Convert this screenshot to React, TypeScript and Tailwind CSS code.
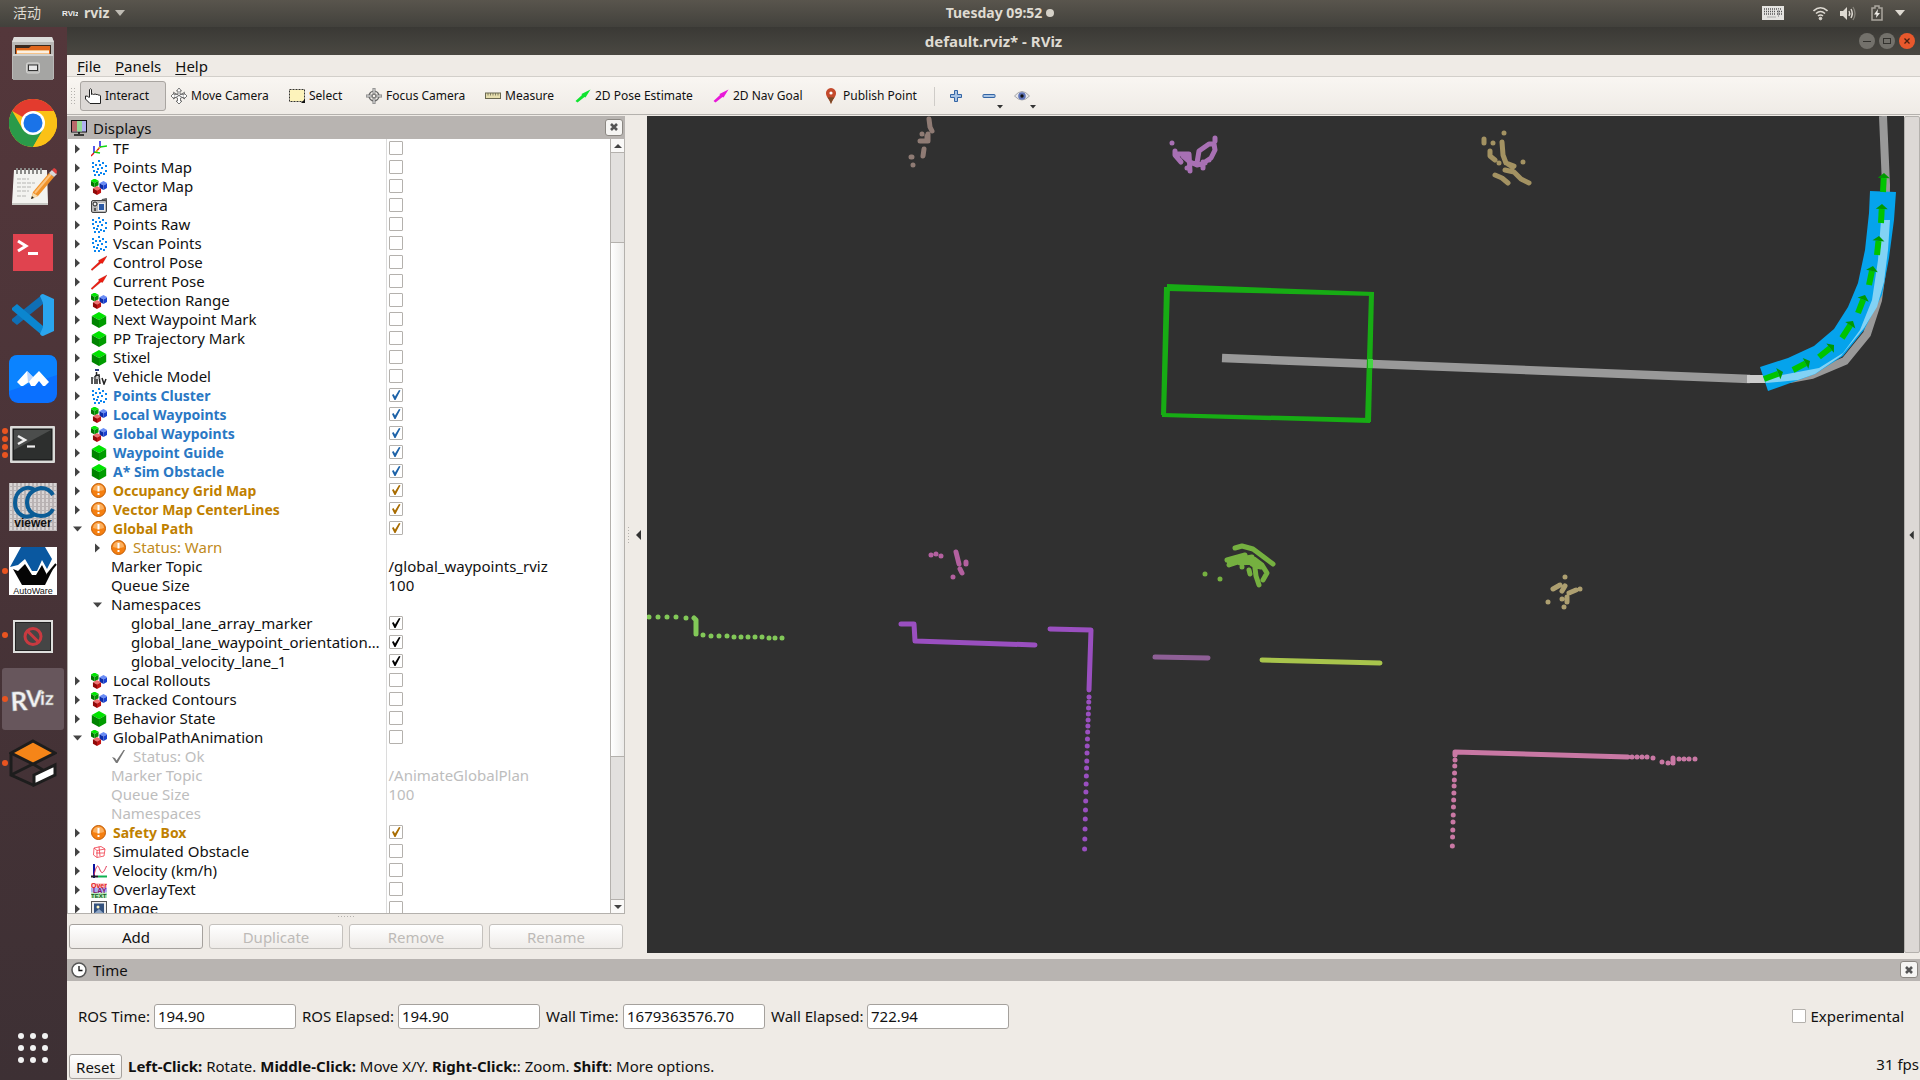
import React from "react";

type IconKind =
  | "tf" | "points" | "markers" | "camera" | "pose" | "cube" | "robot" | "warn"
  | "ok" | "box" | "plot" | "overlay" | "image";

function Hex({ x, y, s, top, left, right }: { x: number; y: number; s: number; top: string; left: string; right: string }) {
  const h = s / 2;
  const w = s * 0.45;
  return (
    <g>
      <path d={`M${x} ${y - h}L${x + w} ${y - h / 2}L${x} ${y}L${x - w} ${y - h / 2}Z`} fill={top} />
      <path d={`M${x - w} ${y - h / 2}L${x} ${y}V${y + h}L${x - w} ${y + h / 2}Z`} fill={left} />
      <path d={`M${x + w} ${y - h / 2}L${x} ${y}V${y + h}L${x + w} ${y + h / 2}Z`} fill={right} />
    </g>
  );
}

const DOTS = [[1, 2], [7, 0], [11, 2], [4, 4], [8, 4], [14, 5], [1, 6], [6, 8], [10, 7], [2, 10], [14, 10], [5, 11], [9, 12], [3, 14], [12, 13], [7, 14]];

function RowIcon({ kind }: { kind: IconKind }) {
  return (
    <svg className="h-4 w-4 shrink-0" viewBox="0 0 16 16" aria-hidden="true">
      {kind === "tf" && (
        <g fill="none" strokeWidth="1.4">
          <path d="M9 0V7M3 5V12" stroke="#1010e0" />
          <path d="M9 6L16 5M3 11L9 12" stroke="#10d810" />
          <path d="M9 6L5 11M3 12L0 15" stroke="#e01010" />
          <path d="M9 6L5 11" stroke="#e0d010" strokeDasharray="2 2" />
        </g>
      )}
      {kind === "points" && DOTS.map(([x, y]) => <rect key={`${x}-${y}`} x={x} y={y} width="2" height="2" fill="#0a85f0" />)}
      {kind === "markers" && (
        <g>
          <Hex x={3.5} y={4} s={9} top="#00e800" left="#007800" right="#009400" />
          <Hex x={12.5} y={6.5} s={9} top="#6a8cf5" left="#0c2ca8" right="#1840d0" />
          <Hex x={6} y={11.5} s={9} top="#f07070" left="#900808" right="#c01414" />
        </g>
      )}
      {kind === "camera" && (
        <g>
          <path d="M11 1.5L15.5 0.5V4H11Z" fill="#777" stroke="#333" strokeWidth="0.7" />
          <rect x="0.5" y="2.5" width="15" height="12" rx="1.5" fill="#b9b9b9" stroke="#444" />
          <rect x="7.5" y="5.5" width="6" height="7" fill="#2c5aa5" stroke="#eee" />
          <circle cx="4" cy="6" r="2" fill="#eee" stroke="#222" />
          <path d="M3 10H5V13H3Z" fill="#555" />
        </g>
      )}
      {kind === "pose" && <path d="M0 14.500L8 7L7.500 5.500L16 1L11.500 8.500L10 8L1 15.500Z" fill="#ee1c10" stroke="#a01008" strokeWidth="0.3" />}
      {kind === "cube" && <Hex x={8} y={8} s={16} top="#00e400" left="#008400" right="#009c00" />}
      {kind === "robot" && (
        <g fill="none" stroke="#222">
          <path d="M4 1H8" stroke="#2a3c80" strokeWidth="2" />
          <path d="M5.500 3V6M1 8V15M4 7V15M4 7L8 6L9 15M6 10V15M11 9L13 15L15 10" strokeWidth="1.500" />
          <path d="M2 9H9" stroke="#888" />
        </g>
      )}
      {kind === "warn" && (
        <g>
          <circle cx="7.500" cy="7.500" r="7" fill="#f57f10" stroke="#c05c05" />
          <path d="M2 7A5.500 5.500 0 0 1 13 7Q8 9 2 7Z" fill="#fbb060" />
          <path d="M7.500 3V8.500M7.500 10V12" stroke="#fff" strokeWidth="2" />
        </g>
      )}
      {kind === "ok" && <path d="M1 8L4 9L5.500 11.500L12.500 1L14 1L6.500 14H5Z" fill="#777" />}
      {kind === "box" && (
        <path d="M3 4L10 2.500L14 5L13 12L6 13.500L2.500 11ZM3 4L6 6.500L14 5M6 6.500V13.500M5 9H13M8 2.500L9 12" fill="none" stroke="#f03848" strokeWidth="0.800" />
      )}
      {kind === "plot" && (
        <g fill="none">
          <path d="M3 1V15" stroke="#0a14a0" strokeWidth="2" />
          <path d="M0 13.500H7" stroke="#222" strokeWidth="2" />
          <path d="M7 13.500H16" stroke="#10b050" strokeWidth="2" />
          <path d="M3 12C6 0 7 2 9 7C11 12 13 9 15.500 3" stroke="#e03050" />
        </g>
      )}
      {kind === "overlay" && (
        <g fontFamily="Liberation Sans" fontWeight="700" fontSize="7">
          <rect y="1" width="16" height="4.500" fill="#ffd0d0" />
          <rect y="5.500" width="16" height="5" fill="#b0b0f0" />
          <rect y="10.500" width="16" height="5.500" fill="#b8e8b8" />
          <text x="0" y="5.500" fill="#e01818">Over</text>
          <text x="2" y="10.500" fill="#801070">LAY</text>
          <text x="0" y="16" fill="#106020" fontSize="6">TEXT</text>
        </g>
      )}
      {kind === "image" && (
        <g>
          <rect x="0.500" y="0.500" width="15" height="15" fill="#eee" stroke="#555" />
          <rect x="3" y="2.500" width="10" height="10" fill="#33517d" />
          <circle cx="7" cy="6" r="1.500" fill="#fff6c0" />
          <path d="M3 12.500L8 8L13 12.500Z" fill="#8ea5c4" />
        </g>
      )}
    </svg>
  );
}

type Tone = "plain" | "blue" | "amber" | "warn" | "off";
interface Row {
  label: string;
  icon?: IconKind;
  depth?: 0 | 1 | 2;
  arrow?: "right" | "down";
  tone?: Tone;
  check?: boolean;
  value?: string;
}

const top = (label: string, icon: IconKind, tone: Tone = "plain", arrow: "right" | "down" = "right"): Row => ({
  label, icon, tone, arrow, depth: 0, check: tone === "blue" || tone === "amber",
});

const ROWS: Row[] = [
  top("TF", "tf"),
  top("Points Map", "points"),
  top("Vector Map", "markers"),
  top("Camera", "camera"),
  top("Points Raw", "points"),
  top("Vscan Points", "points"),
  top("Control Pose", "pose"),
  top("Current Pose", "pose"),
  top("Detection Range", "markers"),
  top("Next Waypoint Mark", "cube"),
  top("PP Trajectory Mark", "cube"),
  top("Stixel", "cube"),
  top("Vehicle Model", "robot"),
  top("Points Cluster", "points", "blue"),
  top("Local Waypoints", "markers", "blue"),
  top("Global Waypoints", "markers", "blue"),
  top("Waypoint Guide", "cube", "blue"),
  top("A* Sim Obstacle", "cube", "blue"),
  top("Occupancy Grid Map", "warn", "amber"),
  top("Vector Map CenterLines", "warn", "amber"),
  top("Global Path", "warn", "amber", "down"),
  { label: "Status: Warn", icon: "warn", depth: 1, arrow: "right", tone: "warn" },
  { label: "Marker Topic", depth: 1, value: "/global_waypoints_rviz" },
  { label: "Queue Size", depth: 1, value: "100" },
  { label: "Namespaces", depth: 1, arrow: "down" },
  { label: "global_lane_array_marker", depth: 2, check: true },
  { label: "global_lane_waypoint_orientation…", depth: 2, check: true },
  { label: "global_velocity_lane_1", depth: 2, check: true },
  top("Local Rollouts", "markers"),
  top("Tracked Contours", "markers"),
  top("Behavior State", "cube"),
  top("GlobalPathAnimation", "markers", "plain", "down"),
  { label: "Status: Ok", icon: "ok", depth: 1, tone: "off" },
  { label: "Marker Topic", depth: 1, tone: "off", value: "/AnimateGlobalPlan" },
  { label: "Queue Size", depth: 1, tone: "off", value: "100" },
  { label: "Namespaces", depth: 1, tone: "off" },
  top("Safety Box", "warn", "amber"),
  top("Simulated Obstacle", "box"),
  top("Velocity (km/h)", "plot"),
  top("OverlayText", "overlay"),
  top("Image", "image"),
];

const TONE: Record<Tone, string> = {
  plain: "text-[#111]",
  blue: "text-sm leading-[19px] text-[#2a78c4] font-bold",
  amber: "text-sm leading-[19px] text-[#c08000] font-bold",
  warn: "text-[#c08a20]",
  off: "text-[#bdbdbd]",
};
const INDENT = { 0: "pl-1", 1: "pl-6", 2: "pl-11" } as const;

function Triangle({ dir }: { dir?: "right" | "down" }) {
  if (!dir) return <span className="w-3 shrink-0" />;
  return (
    <button type="button" aria-label={dir === "right" ? "Expand" : "Collapse"} className="flex w-3 shrink-0 justify-center">
      <svg className="h-3 w-3" viewBox="0 0 12 12" aria-hidden="true">
        <path d={dir === "right" ? "M3 1.500L8 6L3 10.500Z" : "M1 3.500L5.500 8.500L10 3.500Z"} fill="#444" />
      </svg>
    </button>
  );
}

function CheckBox({ label, checked, color }: { label: string; checked: boolean; color: string }) {
  return (
    <span className="relative mb-px block h-[14px] w-[14px] shrink-0">
      <input
        type="checkbox"
        aria-label={label}
        defaultChecked={checked}
        className="peer block h-[14px] w-[14px] appearance-none rounded-[1px] border border-[#b4b1ad] bg-white"
      />
      <svg className={`pointer-events-none absolute inset-0 hidden peer-checked:block ${color}`} viewBox="0 0 14 14" aria-hidden="true">
        <path d="M3 7L4.500 6L6 8.500L10 2L11.500 2.500L6.500 12H5.500Z" fill="currentColor" />
      </svg>
    </span>
  );
}

function DisplayTree() {
  return (
    <div className="flex min-h-0 flex-1 border-b border-l border-[#b4b1ad] bg-white">
      <div className="min-w-0 flex-1 overflow-hidden">
        <table className="w-full table-fixed border-collapse text-[15px] leading-[19px]">
          <colgroup>
            <col className="w-[318px]" />
            <col />
          </colgroup>
          <tbody>
            {ROWS.map((r, i) => {
              const tone = r.tone ?? "plain";
              const tick = tone === "blue" ? "text-[#1c62a8]" : tone === "amber" ? "text-[#a86c00]" : "text-black";
              return (
                <tr key={i} className="h-[19px]">
                  <td className="border-r border-[#dcdcdc] p-0">
                    <div className={`flex h-[19px] items-center ${INDENT[r.depth ?? 0]}`}>
                      <Triangle dir={r.arrow} />
                      <span className="flex min-w-0 flex-1 items-center gap-[6px] pl-[7px] whitespace-nowrap">
                        {r.icon && <RowIcon kind={r.icon} />}
                        <span className={TONE[tone]}>{r.label}</span>
                      </span>
                    </div>
                  </td>
                  <td className="p-0">
                    <div className={`flex h-[19px] items-center pl-[2px] ${TONE[tone]}`}>
                      {r.check !== undefined ? <CheckBox label={r.label} checked={r.check} color={tick} /> : r.value}
                    </div>
                  </td>
                </tr>
              );
            })}
          </tbody>
        </table>
      </div>
      <div className="flex w-[15px] flex-col border-x border-[#b4b1ad] bg-[#e2e0de]">
        <button type="button" aria-label="Scroll up" className="flex h-[14px] items-center justify-center border-b border-[#b4b1ad] bg-[#faf9f8]">
          <svg className="h-2 w-2" viewBox="0 0 8 8" aria-hidden="true"><path d="M0 6L4 2L8 6Z" fill="#444" /></svg>
        </button>
        <div className="h-[89px]" />
        <div className="flex-1 border-y border-[#b4b1ad] bg-linear-to-r from-white to-[#ecebe9]" />
        <div className="h-[142px]" />
        <button type="button" aria-label="Scroll down" className="flex h-[14px] items-center justify-center border-t border-[#b4b1ad] bg-[#faf9f8]">
          <svg className="h-2 w-2" viewBox="0 0 8 8" aria-hidden="true"><path d="M0 2L4 6L8 2Z" fill="#444" /></svg>
        </button>
      </div>
    </div>
  );
}

function CloseButton({ label }: { label: string }) {
  return (
    <button type="button" aria-label={label} className="mb-px flex h-[17px] w-[18px] items-center justify-center rounded-[3px] border border-[#8b8782] bg-[#f6f5f3]">
      <svg className="h-2 w-2" viewBox="0 0 8 8" aria-hidden="true"><path d="M1 1L7 7M7 1L1 7" stroke="#555" strokeWidth="2.600" /></svg>
    </button>
  );
}

const TOOLS: { label: string; width: string; icon: React.ReactNode }[] = [
  {
    label: "Interact", width: "w-[86px]",
    icon: <path d="M4.500 9V1.500Q5.500 0 6.500 1.500V6.500Q8 5.500 8.500 6.500Q10.500 5.500 11 6.500Q12.500 6 13 7Q15 6.500 15.500 8V15.500H5L0.500 11V8Q3 7.500 4.500 10" fill="#fff" stroke="#222" />,
  },
  {
    label: "Move Camera", width: "w-[118px]",
    icon: <path d="M8 0L10.500 3H9V6L13 7V5L16 8L13 11V9L9.500 10V13H11L8 16L5 13H6.500V10L3 9V11L0 8L3 5V7L7 6V3H5.500ZM2 4L14 11M14 4L2 11" fill="#fff" stroke="#666" strokeWidth="0.900" />,
  },
  {
    label: "Select", width: "w-[77px]",
    icon: <g><rect x="0.500" y="1.500" width="15" height="12" fill="#fdf3bb" stroke="#333" strokeDasharray="2 1" /><path d="M16 11V15H12Z" fill="#111" /></g>,
  },
  {
    label: "Focus Camera", width: "w-[119px]",
    icon: <g fill="none" stroke="#666"><circle cx="8" cy="8" r="5" strokeWidth="1.200" /><circle cx="8" cy="8" r="2" /><path d="M7 0H9V6H7ZM7 10H9V16H7ZM0 7H6V9H0ZM10 7H16V9H10Z" fill="#eee" strokeWidth="0.800" /></g>,
  },
  {
    label: "Measure", width: "w-[90px]",
    icon: <g><rect x="0.500" y="5" width="15" height="5.500" fill="#e6deae" stroke="#6a6850" /><path d="M3 5V7.500M5.500 5V7.500M8 5V7.500M10.500 5V7.500M13 5V7.500" stroke="#6a6850" strokeWidth="0.800" /></g>,
  },
  {
    label: "2D Pose Estimate", width: "w-[138px]",
    icon: <path d="M0.500 13L7 7L6.500 6L15.500 1.500L10.500 9.500L9.500 9L2.500 14.500Z" fill="#10e430" />,
  },
  {
    label: "2D Nav Goal", width: "w-[110px]",
    icon: <path d="M0.500 13L7 7L6.500 6L15.500 1.500L10.500 9.500L9.500 9L2.500 14.500Z" fill="#e818d8" />,
  },
  {
    label: "Publish Point", width: "w-[112px]",
    icon: <g><path d="M8 0A5 5 0 0 1 13 5.500C13 9 9 12 8 16C7 12 3 9 3 5.500A5 5 0 0 1 8 0Z" fill="#c44a2c" /><path d="M4.500 9.500Q8 9 11.500 9.500Q9 12 8 16Q7 12 4.500 9.500Z" fill="#7a4a28" /><circle cx="8" cy="5" r="1.600" fill="#fff" /></g>,
  },
];

function Toolbar() {
  return (
    <div role="toolbar" className="flex h-[39px] shrink-0 items-center border-t border-b border-t-[#d2cfca] border-b-[#b4b1ad] bg-linear-to-b from-[#f9f6f2] to-[#efebe6] pt-px text-xs text-[#111]">
      <svg className="mr-[5px] ml-1 h-4 w-1" viewBox="0 0 4 16" aria-hidden="true">
        <path d="M0.500 0V16M3.500 0V16" stroke="#b4b1ad" strokeDasharray="1 2" />
      </svg>
      {TOOLS.map((t, i) => (
        <button
          key={t.label}
          type="button"
          className={`flex h-[30px] items-center gap-1 rounded-[3px] border pl-1 whitespace-nowrap ${t.width} ${i === 0 ? "border-[#a9a5a1] bg-[#dcd8d5]" : "border-transparent"}`}
        >
          <svg className="h-4 w-4 shrink-0" viewBox="0 0 16 16" aria-hidden="true">{t.icon}</svg>
          {t.label}
        </button>
      ))}
      <span className="mx-1 h-[19px] w-px bg-[#cfccc8]" />
      <button type="button" aria-label="Add tool" className="flex w-[33px] items-center justify-center">
        <svg className="h-[14px] w-[14px]" viewBox="0 0 14 14" aria-hidden="true"><path d="M5.500 1.500H8.500V5.500H12.500V8.500H8.500V12.500H5.500V8.500H1.500V5.500H5.500Z" fill="#a9c4e4" stroke="#3465a4" /></svg>
      </button>
      <button type="button" aria-label="Remove tool" className="relative flex w-[33px] items-center justify-center">
        <svg className="h-[14px] w-[14px]" viewBox="0 0 14 14" aria-hidden="true"><rect x="1" y="5.500" width="12" height="3" rx="0.500" fill="#a9c4e4" stroke="#3465a4" /></svg>
        <svg className="absolute top-4 right-[2px] h-1 w-[6px]" viewBox="0 0 6 4" aria-hidden="true"><path d="M0 0H6L3 3.500Z" fill="#333" /></svg>
      </button>
      <button type="button" aria-label="View options" className="relative flex w-[33px] items-center justify-center">
        <svg className="h-[14px] w-4" viewBox="0 0 16 14" aria-hidden="true">
          <path d="M0.500 7Q8 -2 15.500 7Q8 15 0.500 7Z" fill="#e8e8ea" stroke="#a5a5a8" />
          <circle cx="8" cy="7" r="3.800" fill="#5f74b8" /><circle cx="8" cy="7" r="1.700" fill="#111" />
        </svg>
        <svg className="absolute top-4 right-[2px] h-1 w-[6px]" viewBox="0 0 6 4" aria-hidden="true"><path d="M0 0H6L3 3.500Z" fill="#333" /></svg>
      </button>
    </div>
  );
}

function Logo({ name }: { name: string }) {
  return (
    <svg className="h-12 w-12" viewBox="0 0 48 48" aria-hidden="true">
      {name === "Files" && (
        <g>
          <path d="M5 2H43L45 7V44H3V7Z" fill="#b9b9b7" />
          <path d="M5 2H43L45 7H3Z" fill="#dcdcda" />
          <rect x="6" y="10" width="36" height="10" fill="#3a2a20" />
          <path d="M7 13H20L22 11H41V20H7Z" fill="#e0661c" />
          <path d="M8 15H40V20H8Z" fill="#f4c38a" />
          <path d="M8 17H40" stroke="#fff" strokeWidth="1.500" />
          <path d="M4 19H44V45H4Z" fill="#a5a5a3" />
          <path d="M4 19H44V21H4Z" fill="#d2d2d0" />
          <rect x="17.500" y="28" width="13" height="10" rx="1.500" fill="#b4b4b2" stroke="#d8d8d6" />
          <rect x="19.500" y="30" width="9" height="5.500" fill="#e8e8e8" stroke="#333" />
        </g>
      )}
      {name === "Chrome" && (
        <g>
          <circle cx="24" cy="24" r="24" fill="#fbc116" />
          <path d="M24 24L3.200 12A24 24 0 0 1 44.800 12H24Z" fill="#e33b2e" />
          <path d="M3.200 12A24 24 0 0 0 24 48L34.400 30L24 24L13.600 30Z" fill="#2a9a49" />
          <path d="M44.800 12H24V24L34.400 30L24 48A24 24 0 0 0 44.800 12Z" fill="#fbc116" />
          <circle cx="24" cy="24" r="12" fill="#fff" /><circle cx="24" cy="24" r="9.500" fill="#1a73e8" />
        </g>
      )}
      {name === "Text Editor" && (
        <g>
          <path d="M5 7H38L39 40H3Z" fill="#f3f3f0" /><path d="M3 40H39V42H3Z" fill="#c8c8c4" />
          <path d="M8 5V11M12 5V11M16 5V11M20 5V11M24 5V11M28 5V11M32 5V11" stroke="#8a8a88" strokeWidth="2" />
          <path d="M8 16H20M8 20H26M8 24H22M8 28H20M8 33H18" stroke="#b5b5b2" strokeDasharray="4 1" />
          <path d="M24 29L40 10L45 14L29 33L22 36Z" fill="#f0922a" /><path d="M26 30L42 11" stroke="#fcc27c" strokeWidth="2" />
          <path d="M40 10L43 7L48 11L45 14Z" fill="#d8d8d8" /><path d="M43 7L45 5Q48 6 48 9L47 11Z" fill="#e04040" />
          <path d="M24 30L29 33L22 36Z" fill="#f5dcb0" /><path d="M23 33L25 35L22 36Z" fill="#222" />
        </g>
      )}
      {name === "Terminator" && (
        <g><rect x="4" y="7" width="40" height="37" fill="#e0434f" /><path d="M9 14L17 19L9 24" fill="none" stroke="#fff" strokeWidth="3" /><path d="M19 26.500H29" stroke="#fff" strokeWidth="3" /></g>
      )}
      {name === "Visual Studio Code" && (
        <g>
          <path d="M34 13L8 34L3 30L3 28L34 3Z" fill="#0f6fb5" />
          <path d="M34 35L8 13L3 17L3 19L34 45Z" fill="#0b86cf" />
          <path d="M34 3L45 8V40L34 45Q32 45 31 43L34 36V12L31 5Q32 3 34 3Z" fill="#2aa5ee" />
        </g>
      )}
      {name === "Meeting" && (
        <g><rect width="48" height="48" rx="9" fill="#0a70ff" /><path d="M0 9Q0 0 9 0H39Q48 0 48 9V20L0 36Z" fill="#0b83ff" />
          <path d="M8 27L18 16L24 22L30 16L40 27L36 31H34L30 26L26 31H22L20 27L14 31H12Z" fill="#fff" /><path d="M18 16L24 22L19 28Z" fill="#b8d4ff" /></g>
      )}
      {name === "Terminal" && (
        <g><rect x="1" y="7" width="45" height="37" rx="1" fill="#dadad8" /><rect x="4" y="10" width="39" height="31" fill="#2d2f2e" stroke="#111" />
          <path d="M5 11H42L5 31Z" fill="#4b4d4c" /><path d="M9 17L16 21L9 25" fill="none" stroke="#eee" strokeWidth="2.500" /><path d="M18 27.500H26" stroke="#eee" strokeWidth="2.200" /></g>
      )}
      {name === "CloudCompare Viewer" && (
        <g><rect width="48" height="48" fill="#b9b3b4" />
          <path d="M2 0V48M6 0V48M10 0V48M14 0V48M18 0V48M22 0V48M26 0V48M30 0V48M34 0V48M38 0V48M42 0V48M46 0V48" stroke="#d9d5d5" strokeWidth="2" strokeDasharray="3 1" />
          <path d="M26 7Q20 3 14 6Q6 10 6 20Q6 29 14 33Q20 35 26 31" fill="none" stroke="#0b5c96" strokeWidth="4" />
          <path d="M44 12Q40 5 32 5Q18 8 18 20Q19 32 32 33Q41 33 44 26" fill="none" stroke="#0b5c96" strokeWidth="4" />
          <text x="24" y="44" textAnchor="middle" fontFamily="Liberation Sans" fontWeight="700" fontSize="12" fill="#111">viewer</text></g>
      )}
      {name === "Autoware" && (
        <g><rect width="48" height="48" fill="#fff" /><path d="M12 0H36L43 12L38 22L33 13L28 24L23 24L16 12L9 18L1 20Z" fill="#0a58a0" />
          <path d="M4 22L9 24L16 17L23 28H27L33 18L38 28L44 22L36 38H13Z" fill="#050505" /><path d="M38 28L47 17" stroke="#050505" strokeWidth="2" />
          <text x="24" y="47" textAnchor="middle" fontFamily="Liberation Sans" fontSize="9" fill="#111">AutoWare</text></g>
      )}
      {name === "Unavailable" && (
        <g><rect x="4" y="9" width="40" height="33" fill="#dededc" /><rect x="6.500" y="11.500" width="35" height="28" fill="#454545" stroke="#222" />
          <circle cx="24" cy="25.500" r="8" fill="none" stroke="#c83a40" strokeWidth="3" /><path d="M18.500 20L29.500 31" stroke="#c83a40" strokeWidth="3" /></g>
      )}
      {name === "RViz" && (
        <g fontFamily="Lato, Liberation Sans" fontWeight="900" fill="#f2f2f2" stroke="#8d8d8d" strokeWidth="0.500">
          <text x="2" y="36" fontSize="26" transform="rotate(-3 2 36)">R</text>
          <text x="17" y="32" fontSize="23">V</text>
          <text x="31" y="30" fontSize="19">iz</text>
        </g>
      )}
      {name === "Simulator" && (
        <g fill="none" stroke="#1d1d1d" strokeWidth="3"><path d="M24 2L46 14L24 25L2 14Z" fill="#f58518" /><path d="M2 14V36L24 46M24 25L2 36M24 25L34 31" /><path d="M25 36L46 26V36L25 46Z" fill="#fff" /></g>
      )}
    </svg>
  );
}

const DOCK: { name: string; dots: number; active?: boolean }[] = [
  { name: "Files", dots: 0 }, { name: "Chrome", dots: 0 }, { name: "Text Editor", dots: 0 }, { name: "Terminator", dots: 0 },
  { name: "Visual Studio Code", dots: 0 }, { name: "Meeting", dots: 0 }, { name: "Terminal", dots: 4 }, { name: "CloudCompare Viewer", dots: 0 },
  { name: "Autoware", dots: 1 }, { name: "Unavailable", dots: 1 }, { name: "RViz", dots: 1, active: true }, { name: "Simulator", dots: 1 },
];

function Dock() {
  return (
    <nav aria-label="Dock" className="flex w-[67px] shrink-0 flex-col bg-linear-to-b from-[#54373b] to-[#3d3034] pr-px">
      {DOCK.map((d) => (
        <button key={d.name} type="button" aria-label={d.name} className="relative flex h-16 items-center justify-center">
          <span className={`flex h-[62px] w-[62px] items-center justify-center rounded-[3px] ${d.active ? "bg-[#67565c]" : ""}`}>
            <Logo name={d.name} />
          </span>
          <span className="absolute inset-y-0 left-[2px] flex flex-col justify-center gap-[2px]">
            {Array.from({ length: d.dots }, (_, i) => <span key={i} className="h-[6px] w-[6px] rounded-full bg-[#e95420]" />)}
          </span>
        </button>
      ))}
      <button type="button" aria-label="Show applications" className="mt-auto flex h-16 items-center justify-center">
        <span className="grid grid-cols-3 gap-[6px]">
          {Array.from({ length: 9 }, (_, i) => <span key={i} className="h-[6px] w-[6px] rounded-full bg-[#f2f2f2]" />)}
        </span>
      </button>
    </nav>
  );
}

const LANE_ARROWS = [
  [1764, 379, 1783, 372], [1793, 370, 1810, 361], [1819, 357, 1834, 345], [1842, 338, 1853, 321], [1858, 313, 1865, 295],
  [1869, 285, 1873, 266], [1877, 255, 1879, 236], [1881, 223, 1882, 204], [1883, 192, 1884, 173],
];

const CLUSTERS = [
  { color: "#8f7b74", d: "M929 119l1 8l2 4M922 134h0M928 134v7h-8M927 136v4M924 149l-1 7M911 157h1M913 165h0" },
  { color: "#a870b4", d: "M1172 143h0M1215 138v3M1175 151v4l6 7M1177 154h12l1 17M1187 168h0M1183 156l7 6l7 3l8 -2M1190 162l7 3l8 -3l6 -4l4 -8l-1 -6h-5l-10 7l-2 12M1203 162v6M1209 160h0" },
  { color: "#a39262", d: "M1504 133h0M1484 139v4M1493 143h0M1502 142l1 13l3 8l8 3M1490 151v5l5 4M1499 163h0M1508 164l5 3M1523 162h0M1505 170l9 2l7 7l8 4M1495 175l7 3l6 5" },
  { color: "#b3609f", d: "M931 555h0M936 554h0M941 556h0M956 552l3 12M966 562v2M960 569l2 4M953 577h0" },
  { color: "#75b040", d: "M1205 574h0M1220 579h0M1235 548L1242 546L1253 549L1265 558L1273 564M1227 560L1245 555M1229 565L1244 560L1254 559L1262 565L1267 573L1263 580M1229 562L1252 561M1236 560L1252 557M1240 563L1253 562M1252 564L1256 566L1261 567M1254 560L1256 576L1259 585M1242 567h0M1249 570l1 4" },
  { color: "#ad9f70", d: "M1565 577h0M1553 589l7 -4M1565 586l-3 5M1569 593l7 -3M1580 589h0M1562 599h0M1567 597v5M1548 602h0M1564 607h0" },
  { color: "#82c858", d: "M649 617h0M658 617h0M667 617h0M676 617h0M686 618h0M694 618L696 620V634M703 635h0M711 636h0M719 636h0M727 636h0M734 637h0M741 637h0M748 637h0M755 637h0M762 637h0M769 638h0M775 638h0M782 638h0" },
  { color: "#9a4fc0", d: "M901 624h13l1 17L1035 645M1050 629L1091 630L1089 690" },
  { color: "#8e5f96", d: "M1155 657L1208 658" },
  { color: "#a8c44c", d: "M1262 660L1380 663" },
  { color: "#c978a4", d: "M1455 755V752L1628 757M1632 757h0M1637 757h0M1642 757h0M1647 757h0M1653 758h0M1662 762h0M1668 763h0M1673 763V758M1679 759h0M1684 759h0M1689 759h0M1695 759h0" },
];

const PURPLE_TAIL = [697, 702, 708, 714, 720, 726, 732, 739, 746, 753, 761, 768, 776, 784, 792, 801, 810, 819, 829, 839, 849];
const PINK_TAIL = [760, 766, 773, 780, 786, 793, 800, 807, 815, 822, 830, 837, 846];

function Viewport() {
  return (
    <svg className="block h-full w-full bg-[#303030]" viewBox="647 116 1257 837" preserveAspectRatio="xMinYMin slice" role="img" aria-label="3D view">
      <path d="M1222 358L1750 379" stroke="#999" strokeWidth="8.500" />
      <path d="M1747 379L1790 379L1812 375L1845 361L1867 334L1878 300L1885 250L1886 185L1883 116" fill="none" stroke="#999" strokeWidth="8" />
      <path d="M1747 375L1766 375V383L1747 383Z" fill="#ccc" />
      <path d="M1760 367L1788 358L1814 346L1834 329L1848 307L1858 283L1865 250L1869 213L1870 191L1896 192L1894 220L1889 258L1882 295L1864 330L1843 356L1815 374L1768 391Z" fill="#05a3ec" />
      <path d="M1881 220H1890L1888 250L1884 282L1877 307L1864 328L1841 356L1815 374L1798 380L1766 383L1764 380L1782 375L1819 368L1843 353L1860 330L1872 300L1878 260Z" fill="#82d2f5" />
      <path d="M1167 284L1374 292V296L1167 291Z" fill="#17ac14" />
      <path d="M1162 413L1370 418V423L1162 417Z" fill="#17ac14" />
      <path d="M1164 287H1170L1166 415H1161Z" fill="#17ac14" />
      <path d="M1369 293H1374L1371 422H1365Z" fill="#17ac14" />
      <path d="M1368 359H1373V368H1368Z" fill="#45d544" />
      {LANE_ARROWS.map(([x1, y1, x2, y2]) => {
        const len = Math.hypot(x2 - x1, y2 - y1);
        const angle = (Math.atan2(y2 - y1, x2 - x1) * 180) / Math.PI;
        return (
          <g key={x1} transform={`translate(${x1} ${y1}) rotate(${angle})`}>
            <path d={`M0 -3H${len - 5}V3H0Z`} fill="#00c400" />
            <path d={`M${len - 5} -6L${len} 0L${len - 5} 6Z`} fill="#009a00" />
          </g>
        );
      })}
      {CLUSTERS.map((c) => (
        <path key={c.color} d={c.d} fill="none" stroke={c.color} strokeWidth="5" strokeLinecap="round" strokeLinejoin="round" />
      ))}
      {PURPLE_TAIL.map((y, i) => <circle key={y} cx={1089 - i * 0.22} cy={y} r="2.500" fill="#9a4fc0" />)}
      {PINK_TAIL.map((y, i) => <circle key={y} cx={1455 - i * 0.22} cy={y} r="2.500" fill="#c978a4" />)}
    </svg>
  );
}

function PaneHandle({ grip }: { grip?: boolean }) {
  return (
    <svg className="h-5 w-4" viewBox="0 0 16 20" aria-hidden="true">
      {grip && <path d="M0.500 2V18" stroke="#b4b1ad" strokeDasharray="1 2" />}
      <path d={grip ? "M13 5V15L8 10Z" : "M10 5V15L5 10Z"} fill="#333" />
    </svg>
  );
}

const TIMES = [
  { label: "ROS Time:", id: "ros-time", value: "194.90", width: "w-[76px]" },
  { label: "ROS Elapsed:", id: "ros-elapsed", value: "194.90", width: "w-[96px]" },
  { label: "Wall Time:", id: "wall-time", value: "1679363576.70", width: "w-[77px]" },
  { label: "Wall Elapsed:", id: "wall-elapsed", value: "722.94", width: "w-[96px]" },
];

function TopBar() {
  return (
    <header className="grid h-[27px] shrink-0 grid-cols-3 items-center bg-linear-to-b from-[#59554d] to-[#42413c] pb-px text-sm font-bold text-[#dfdbd2]">
      <div className="flex items-center pl-[13px]">
        <button type="button" className="font-normal">活动</button>
        <button type="button" className="ml-[21px] flex items-center">
          <svg className="mr-[6px] h-4 w-4" viewBox="0 0 16 16" aria-hidden="true">
            <text x="0" y="11" fontFamily="Liberation Sans" fontWeight="700" fontSize="8" fill="#eee">RViz</text>
          </svg>
          rviz
          <svg className="ml-[6px] h-[6px] w-[10px]" viewBox="0 0 10 6" aria-hidden="true"><path d="M0 0H10L5 6Z" fill="#bfbcb4" /></svg>
        </button>
      </div>
      <button type="button" className="flex items-center justify-center gap-1 pl-20">
        Tuesday 09:52
        <span className="h-2 w-2 rounded-full bg-[#d5d1c8]" />
      </button>
      <div className="flex items-center justify-end pr-[15px]">
        <svg className="mr-[29px] h-[14px] w-[22px]" viewBox="0 0 22 14" aria-hidden="true">
          <rect width="22" height="14" fill="#e4e3e0" />
          <path d="M2 3H20M2 5.500H13M2 8H13M15 5.500H20M15 8H20" stroke="#555" strokeWidth="1.500" strokeDasharray="1 1" />
          <path d="M5 11H14M16.500 3V11" stroke="#aaa" />
        </svg>
        <svg className="mr-3 h-[15px] w-[15px]" viewBox="0 0 15 15" fill="none" stroke="#dedad2" aria-hidden="true">
          <path d="M0.500 5Q7.500 -1.500 14.500 5" strokeWidth="1.600" /><path d="M3 7.500Q7.500 3.500 12 7.500" strokeWidth="1.600" /><path d="M5 10Q7.500 8 10 10" strokeWidth="1.600" />
          <circle cx="7.500" cy="12.500" r="1.300" fill="#dedad2" />
        </svg>
        <svg className="mr-[15px] h-[15px] w-4" viewBox="0 0 16 15" fill="none" aria-hidden="true">
          <path d="M0 5H3L7 1V14L3 10H0Z" fill="#dedad2" />
          <path d="M9 5Q10.500 7.500 9 10M11 3Q13.500 7.500 11 12" stroke="#dedad2" strokeWidth="1.400" />
          <path d="M13 1Q17 7.500 13 14" stroke="#85827a" strokeWidth="1.300" />
        </svg>
        <svg className="mr-3 h-4 w-3" viewBox="0 0 12 16" fill="none" aria-hidden="true">
          <path d="M1 3H4V1H8V3H11V15H1Z" stroke="#aaa69e" strokeWidth="1.500" /><path d="M7 4L3 9.500H5.500L5 13L9 8H6.500Z" fill="#eceae5" />
        </svg>
        <svg className="h-[6px] w-[10px]" viewBox="0 0 10 6" aria-hidden="true"><path d="M0 0H10L5 6Z" fill="#dedad2" /></svg>
      </div>
    </header>
  );
}

function TitleBar() {
  const round = "flex h-4 w-4 items-center justify-center rounded-full";
  return (
    <div className="relative flex h-7 shrink-0 items-center justify-center bg-linear-to-b from-[#3a3935] to-[#4a4842] font-bold text-[#dfdbd2]">
      <h1>default.rviz* - RViz</h1>
      <div className="absolute inset-y-0 right-[5px] flex items-center gap-1">
        <button type="button" aria-label="Minimize" className={`${round} bg-[#73716b]`}>
          <svg className="h-2 w-2" viewBox="0 0 8 8" aria-hidden="true"><path d="M0 4.500H8" stroke="#33322e" /></svg>
        </button>
        <button type="button" aria-label="Maximize" className={`${round} bg-[#73716b]`}>
          <svg className="h-2 w-2" viewBox="0 0 8 8" aria-hidden="true"><rect x="0.500" y="1.500" width="7" height="5" fill="none" stroke="#33322e" /></svg>
        </button>
        <button type="button" aria-label="Close window" className={`${round} bg-[#e9582c]`}>
          <svg className="h-2 w-2" viewBox="0 0 8 8" aria-hidden="true"><path d="M1.500 1.500L6.500 6.500M6.500 1.500L1.500 6.500" stroke="#4a2010" strokeWidth="1.300" /></svg>
        </button>
      </div>
    </div>
  );
}

export default function App() {
  return (
    <div className="flex h-screen flex-col overflow-hidden bg-[#efebe6] font-['Noto_Sans','Noto_Sans_CJK_SC',sans-serif] text-[15px] leading-5 text-[#111]">
      <TopBar />
      <div className="flex min-h-0 flex-1">
        <Dock />
        <div className="flex min-w-0 flex-1 flex-col">
          <TitleBar />
          <div role="menubar" className="flex h-[21px] shrink-0 items-center gap-[14px] pl-[10px]">
            {["File", "Panels", "Help"].map((m) => (
              <button key={m} type="button" role="menuitem"><u className="underline-offset-2">{m[0]}</u>{m.slice(1)}</button>
            ))}
          </div>
          <Toolbar />
          <main className="flex min-h-0 flex-1 pt-px">
            <section aria-label="Displays" className="flex w-[558px] shrink-0 flex-col">
              <div className="flex h-[23px] shrink-0 items-center bg-[#b8b4b1] pr-[2px] pl-1">
                <svg className="mr-[6px] h-4 w-4" viewBox="0 0 16 16" aria-hidden="true">
                  <rect x="0.500" y="0.500" width="15" height="11.500" fill="#b0b0f0" stroke="#111" />
                  <rect x="1" y="1" width="5" height="10.500" fill="#b86a6a" /><rect x="6" y="1" width="5" height="10.500" fill="#94dc94" />
                  <path d="M8 12V14M3 15H13" stroke="#111" strokeWidth="1.600" />
                </svg>
                <h2 className="flex-1">Displays</h2>
                <CloseButton label="Close Displays" />
              </div>
              <DisplayTree />
              <div className="flex h-[10px] shrink-0 justify-center pt-px">
                <svg className="h-[3px] w-4" viewBox="0 0 16 3" aria-hidden="true"><path d="M0 1.500H16" stroke="#b4b1ad" strokeDasharray="1 2" /></svg>
              </div>
              <div className="mb-[10px] grid h-[25px] shrink-0 grid-cols-4 gap-[6px] px-[2px]">
                {["Add", "Duplicate", "Remove", "Rename"].map((b, i) => (
                  <button
                    key={b}
                    type="button"
                    disabled={i > 0}
                    className={`rounded-[3px] border bg-linear-to-b from-white to-[#eeebe8] ${i ? "border-[#c4c1bd] text-[#bdbab7]" : "border-[#a5a19d]"}`}
                  >
                    {b}
                  </button>
                ))}
              </div>
            </section>
            <div className="mb-[6px] flex w-[22px] shrink-0 items-center pl-[3px]"><PaneHandle grip /></div>
            <div className="mb-[6px] min-w-0 flex-1 overflow-hidden"><Viewport /></div>
            <button type="button" aria-label="Show right panels" className="mb-[6px] flex w-4 shrink-0 items-center justify-center rounded-[2px] border border-[#b4b1ad] bg-[#dcd8d5]">
              <PaneHandle />
            </button>
          </main>
          <section aria-label="Time" className="shrink-0">
            <div className="flex h-[22px] items-center bg-[#b8b4b1] pr-[2px] pl-1">
              <svg className="mr-[6px] h-4 w-4" viewBox="0 0 16 16" aria-hidden="true">
                <circle cx="8" cy="8" r="7" fill="#fff" stroke="#555" strokeWidth="1.500" /><path d="M8 4V8.500H11.500" fill="none" stroke="#111" strokeWidth="1.300" />
              </svg>
              <h2 className="flex-1">Time</h2>
              <CloseButton label="Close Time" />
            </div>
            <div className="flex h-[70px] items-center pr-4 pl-[11px]">
              {TIMES.map((t) => (
                <div key={t.id} className="mr-[6px] flex items-center">
                  <label htmlFor={t.id} className={`whitespace-nowrap ${t.width}`}>{t.label}</label>
                  <input id={t.id} defaultValue={t.value} className="h-[25px] w-[142px] rounded-[3px] border border-[#a5a19d] bg-white px-[3px]" />
                </div>
              ))}
              <label className="ml-auto flex items-center gap-[5px]">
                <CheckBox label="Experimental" checked={false} color="text-black" />
                Experimental
              </label>
            </div>
          </section>
          <footer className="flex h-[29px] shrink-0 items-start pt-[3px] pl-[2px]">
            <button type="button" className="h-[25px] w-[53px] rounded-[3px] border border-[#a5a19d] bg-linear-to-b from-white to-[#eeebe8]">Reset</button>
            <p className="ml-[6px] pt-[2px]">
              <b>Left-Click:</b> Rotate. <b>Middle-Click:</b> Move X/Y. <b>Right-Click:</b>: Zoom. <b>Shift</b>: More options.
            </p>
            <p className="ml-auto pr-px">31 fps</p>
          </footer>
        </div>
      </div>
    </div>
  );
}
